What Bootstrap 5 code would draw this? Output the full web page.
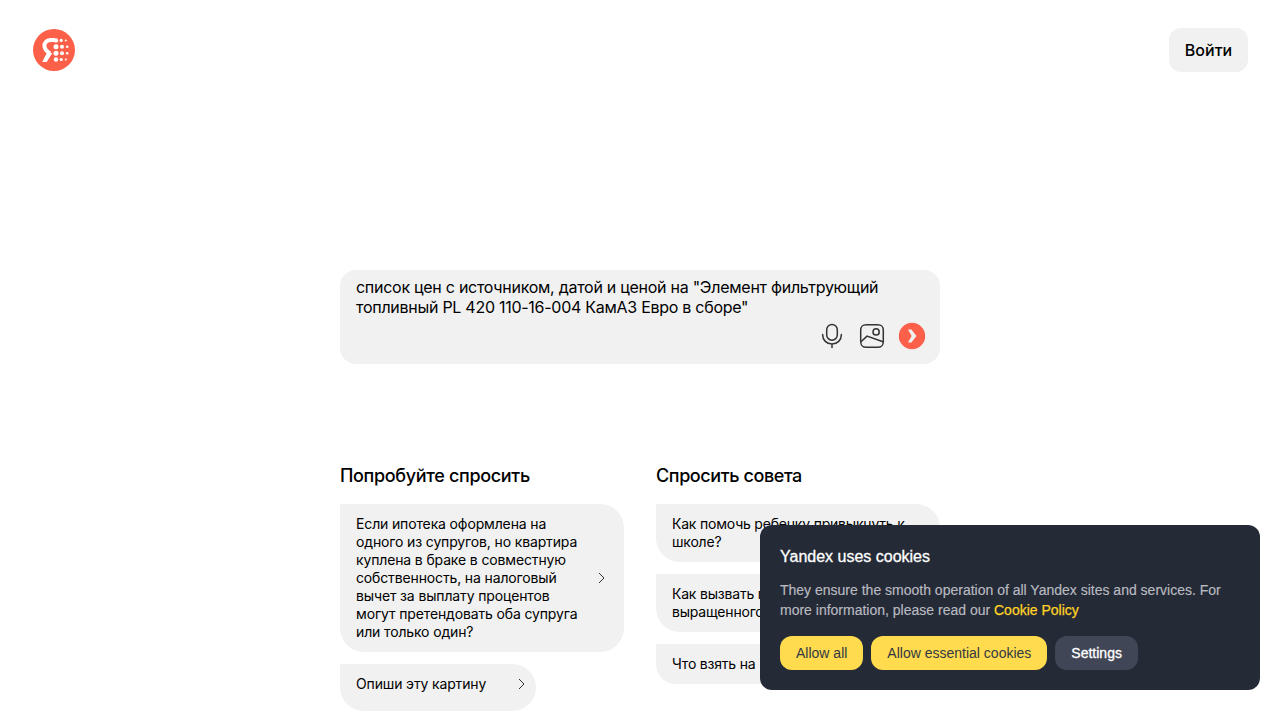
<!DOCTYPE html>
<html lang="ru">
<head>
<meta charset="utf-8">
<meta name="viewport" content="width=device-width, initial-scale=1">
<title>Яндекс</title>
<link href="https://cdn.jsdelivr.net/npm/bootstrap@5.3.0/dist/css/bootstrap.min.css" rel="stylesheet">
<style>
body{font-family:Inter,"Liberation Sans",sans-serif;color:#000;background:#fff;height:100vh;overflow:hidden}
.topbar{padding:28px 32px 0;height:270px}
.login{background:#f1f1f1;color:#000;border:0;border-radius:12px;height:44px;width:79px;padding:0;font-size:16px;font-weight:500}
.main-col{width:600px}
.ask{background:#f1f1f1;border-radius:16px;height:94px;padding:7px 12px 12px 16px;font-size:16px;line-height:20px}
.ask-text{letter-spacing:-.27px;white-space:nowrap}
.suggest{margin-top:102px;gap:32px}
.group{width:284px}
.group h2{font-size:18px;line-height:20px;font-weight:500;margin:0 0 18px;letter-spacing:-.33px}
.bubble{background:#f1f1f1;border-radius:0 24px 24px 24px;padding:11px 16px;font-size:14px;line-height:18px;margin-bottom:12px;white-space:nowrap;letter-spacing:-.14px;min-height:40px}
.advice h2{letter-spacing:-.4px}
.advice .bubble{letter-spacing:-.2px}
.bubble.image{width:196px;height:47px;padding:11px 8px 18px 16px}
.cookies{position:fixed;left:760px;top:525px;width:500px;height:165px;border-radius:12px;background:#252a37;padding:20px;font-family:"Liberation Sans",Arial,sans-serif;color:#fff}
.cookies h3{font-size:16px;line-height:24px;font-weight:400;margin:0 0 11px;-webkit-text-stroke:.3px #fff}
.cookies p{font-size:14px;line-height:20px;color:#b9bbc0;margin:0 0 16px;white-space:nowrap;-webkit-text-stroke:.15px #b9bbc0}
.cookies a{color:#ffd426;text-decoration:none;-webkit-text-stroke:.25px #ffd426}
.cookies .btn{border:0;border-radius:12px;height:34px;padding:0 16px;font-size:14px;line-height:34px}
.accept,.accept:hover{background:#ffdb4d;color:#333844}
.settings,.settings:hover{background:#414656;color:#fff;-webkit-text-stroke:.3px #fff}
</style>
</head>
<body>
<header class="topbar d-flex justify-content-between align-items-start">
  <svg width="44" height="44" viewBox="32 28 44 44" aria-hidden="true">
    <circle cx="54" cy="50" r="21" fill="#fc6049"/>
    <path d="M55 40H51.3C47 40 44.4 42.3 44.4 46C44.4 49.2 46.3 51 49.9 53.3" fill="none" stroke="#fff" stroke-width="4"/>
    <path d="M47.6 51.4L52.2 53.3L46.7 62H42.2Z" fill="#fff"/>
    <g fill="#fff">
      <circle cx="56" cy="40.4" r="2.2"/><circle cx="61.2" cy="40.4" r="1.6"/><circle cx="65.8" cy="40.4" r="1"/>
      <circle cx="56" cy="46.7" r="2.5"/><circle cx="62" cy="46.7" r="2"/><circle cx="67.2" cy="46.7" r="1.3"/>
      <circle cx="56" cy="53.2" r="2.5"/><circle cx="62" cy="53.2" r="2"/><circle cx="67.2" cy="53.2" r="1.3"/>
      <circle cx="56" cy="59.5" r="2.2"/><circle cx="61.2" cy="59.5" r="1.6"/><circle cx="65.8" cy="59.5" r="1"/>
    </g>
  </svg>
  <button class="btn login">Войти</button>
</header>
<main class="main-col mx-auto">
  <div class="ask d-flex flex-column justify-content-between">
    <div class="ask-text">список цен с источником, датой и ценой на "Элемент фильтрующий<br>топливный PL 420 110-16-004 КамАЗ Евро в сборе"</div>
    <div class="d-flex justify-content-end gap-2">
      <svg width="32" height="32" viewBox="0 0 32 32" fill="none" stroke="#333" stroke-width="1.5" stroke-linecap="round"><rect x="10.7" y="4.4" width="10.6" height="15.8" rx="5.3"/><path d="M6.6 14.6C6.6 20.2 10.6 24 16 24S25.4 20.2 25.4 14.6M16 24V27.5"/></svg>
      <svg width="32" height="32" viewBox="0 0 32 32" fill="none" stroke="#333" stroke-width="1.5"><path d="M10.5 4.7H21.5C25.8 4.7 27.3 6.2 27.3 10.5V21.5C27.3 25.8 25.8 27.3 21.5 27.3H10.5C6.2 27.3 4.7 25.8 4.7 21.5V10.5C4.7 6.2 6.2 4.7 10.5 4.7Z"/><circle cx="20.1" cy="11.9" r="3.1"/><path d="M5 21.8L11 16.1L27 21.8"/></svg>
      <svg width="32" height="32" viewBox="0 0 32 32"><circle cx="16" cy="16" r="13.2" fill="#fc6049"/><path d="M12 9.6H15.4L20.5 16L15.4 22.6H12L15.6 16Z" fill="#f1f1f1"/></svg>
    </div>
  </div>
  <div class="suggest d-flex">
    <section class="group">
      <h2>Попробуйте спросить</h2>
      <div class="bubble d-flex justify-content-between align-items-center">
        <span>Если ипотека оформлена на<br>одного из супругов, но квартира<br>куплена в браке в совместную<br>собственность, на налоговый<br>вычет за выплату процентов<br>могут претендовать оба супруга<br>или только один?</span>
        <svg width="12" height="12" viewBox="0 0 12 12" fill="none" stroke="#333" stroke-width="1"><path d="M3 1L8 6L3 11"/></svg>
      </div>
      <div class="bubble image d-flex justify-content-between align-items-center"><span>Опиши эту картину</span>
        <svg width="12" height="12" viewBox="0 0 12 12" fill="none" stroke="#333" stroke-width="1"><path d="M3 1L8 6L3 11"/></svg>
      </div>
    </section>
    <section class="group advice">
      <h2>Спросить совета</h2>
      <div class="bubble">Как помочь ребенку привыкнуть к<br>школе?</div>
      <div class="bubble">Как вызвать п<br>выращенного</div>
      <div class="bubble">Что взять на</div>
    </section>
  </div>
</main>
<aside class="cookies">
  <h3>Yandex uses cookies</h3>
  <p>They ensure the smooth operation of all Yandex sites and services. For<br>more information, please read our <a href="#">Cookie Policy</a></p>
  <div class="d-flex gap-2"><button class="btn accept">Allow all</button><button class="btn accept">Allow essential cookies</button><button class="btn settings">Settings</button></div>
</aside>
<script src="https://cdn.jsdelivr.net/npm/bootstrap@5.3.0/dist/js/bootstrap.bundle.min.js"></script>
</body>
</html>
